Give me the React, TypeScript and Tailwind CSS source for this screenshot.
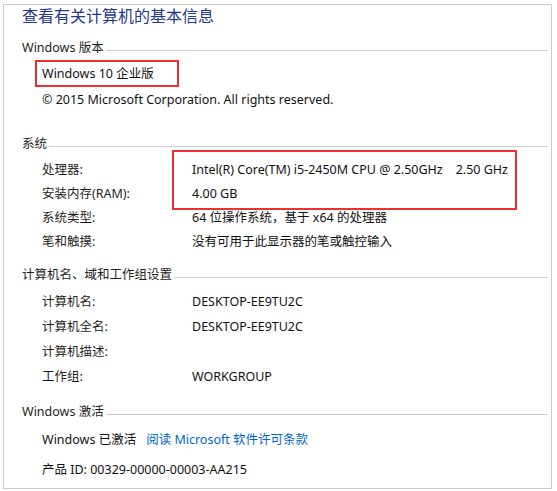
import React from "react";

const font = { fontFamily: '"Noto Sans", "Noto Sans CJK SC", sans-serif' };

function Header({ children }: { children: React.ReactNode }) {
  return (
    <div className="flex h-[20px] items-center pr-[3px]">
      <span className="text-[12.5px] text-[#1e1e1e] whitespace-pre">{children}</span>
      <div className="ml-[2px] mt-[5px] h-px flex-1 bg-[#cdcdcd]" />
    </div>
  );
}

function Row({ label, value, h = "h-[24px]" }: { label: string; value?: string; h?: string }) {
  return (
    <div className={`flex items-center pl-[20px] text-[12.5px] ${h}`}>
      <span className="w-[150px] shrink-0 text-[#1e1e1e]">{label}</span>
      <span className="text-[#111] whitespace-pre">{value}</span>
    </div>
  );
}

export default function App() {
  return (
    <div className="relative h-[491px] w-[557px] bg-white" style={font}>
      <div className="ml-[3px] pt-[4px]">
        <div className="flex h-[485px] w-[549px] flex-col border border-[#cacaca] pl-[18px]">
          <div className="flex h-[22px] items-center text-[16px] text-[#1e3991]">查看有关计算机的基本信息</div>
          <div className="mt-[11px]">
            <Header>Windows 版本</Header>
          </div>
          <div className="mt-[3px] flex h-[26px] items-center pl-[20px] text-[12.5px] text-[#111]">Windows 10 企业版</div>
          <div className="flex h-[26px] items-center pl-[20px] text-[12.5px] text-[#111]">© 2015 Microsoft Corporation. All rights reserved.</div>

          <div className="mt-[21px]">
            <Header>系统</Header>
          </div>
          <div className="mt-[4px]">
            <Row label="处理器:" value={"Intel(R) Core(TM) i5-2450M CPU @ 2.50GHz    2.50 GHz"} />
            <Row label="安装内存(RAM):" value="4.00 GB" />
            <Row label="系统类型:" value="64 位操作系统，基于 x64 的处理器" />
            <Row label="笔和触摸:" value="没有可用于此显示器的笔或触控输入" />
          </div>

          <div className="mt-[11px]">
            <Header>计算机名、域和工作组设置</Header>
          </div>
          <div className="mt-[5px]">
            <Row h="h-[25px]" label="计算机名:" value="DESKTOP-EE9TU2C" />
            <Row h="h-[25px]" label="计算机全名:" value="DESKTOP-EE9TU2C" />
            <Row h="h-[25px]" label="计算机描述:" value="" />
            <Row h="h-[25px]" label="工作组:" value="WORKGROUP" />
          </div>

          <div className="mt-[12px]">
            <Header>Windows 激活</Header>
          </div>
          <div className="mt-[6px] flex h-[24px] items-center pl-[20px] text-[12.5px]">
            <span className="text-[#111]">Windows 已激活</span>
            <span className="ml-[10px] text-[#0066cc]">阅读 Microsoft 软件许可条款</span>
          </div>
          <div className="mt-[6px] flex h-[24px] items-center pl-[20px] text-[12.5px] text-[#111]">
            产品 ID: 00329-00000-00003-AA215
          </div>
        </div>
      </div>

      <div className="absolute left-[35px] top-[60px] h-[27px] w-[144px] border-2 border-[#ec2f2f]" />
      <div className="absolute left-[172px] top-[150px] h-[60px] w-[345px] border-2 border-[#ec2f2f]" />
    </div>
  );
}
